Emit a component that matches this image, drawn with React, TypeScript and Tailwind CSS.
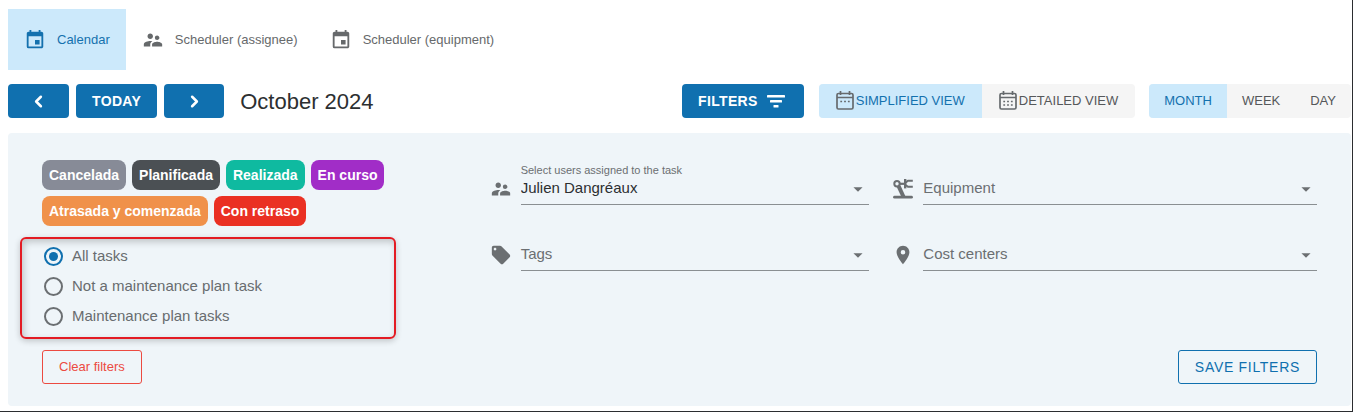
import { useState, type ReactNode } from "react";
import { ChevronLeft, ChevronRight } from "lucide-react";
import { MdArrowDropDown, MdEvent, MdLocalOffer, MdPlace, MdSupervisorAccount } from "react-icons/md";

const tabs = [
  { name: "Calendar", icon: <MdEvent size={22} /> },
  { name: "Scheduler (assignee)", icon: <MdSupervisorAccount size={22} /> },
  { name: "Scheduler (equipment)", icon: <MdEvent size={22} /> },
];

const statuses = [
  { name: "Cancelada", color: "bg-[#878b97]" },
  { name: "Planificada", color: "bg-[#4b5054]" },
  { name: "Realizada", color: "bg-[#0fbaa0]" },
  { name: "En curso", color: "bg-[#a12dc7]" },
  { name: "Atrasada y comenzada", color: "bg-[#f0914a]" },
  { name: "Con retraso", color: "bg-[#ea3023]" },
];

const taskTypes = ["All tasks", "Not a maintenance plan task", "Maintenance plan tasks"];

function CalendarIcon({ rows }: { rows: number[] }) {
  return (
    <svg width="18" height="20" viewBox="0 0 18 20" fill="none" stroke="#666a6d" strokeWidth="1.7" aria-hidden="true">
      <rect x="1" y="2.5" width="16" height="15.5" rx="1.5" />
      <path d="M1 6.5h16M4.5 0V4M13.5 0V4" />
      {rows.map((y) => (
        <path key={y} d={`M4.3 ${y}h1.8M8.1 ${y}h1.8M11.9 ${y}h1.8`} />
      ))}
    </svg>
  );
}

function FilterIcon() {
  return (
    <svg width="24" height="24" viewBox="0 0 24 24" fill="currentColor" aria-hidden="true">
      <rect x="3" y="6" width="18" height="2.6" rx=".6" />
      <rect x="6" y="11" width="12" height="2.6" rx=".6" />
      <rect x="9.5" y="16" width="5" height="2.6" rx=".6" />
    </svg>
  );
}

function RobotArmIcon() {
  return (
    <svg width="20" height="20" viewBox="0 0 20 20" fill="none" stroke="currentColor" aria-hidden="true">
      <circle cx="4" cy="4.8" r="2.7" strokeWidth="2" />
      <path d="M6.5 4.8H12" strokeWidth="2.2" />
      <path d="M12.2 0v9.4" strokeWidth="2.4" />
      <path d="M12.5 3.6 15 1.8h4.8M12.5 6 15 7.8h4.8" strokeWidth="2" />
      <path d="M5.6 7.2 10.6 18" strokeWidth="4" />
      <path d="M1.5 18.2h17" strokeWidth="2.8" strokeLinecap="round" />
    </svg>
  );
}

interface ToggleProps {
  options: { name: string; icon?: ReactNode }[];
  padding: string;
}

function ToggleGroup({ options, padding }: ToggleProps) {
  const [active, setActive] = useState(options[0].name);

  return (
    <div className="flex h-[34px] overflow-hidden rounded bg-[#f5f5f5] text-[13px]">
      {options.map((o) => (
        <button
          key={o.name}
          type="button"
          aria-pressed={active === o.name}
          onClick={() => setActive(o.name)}
          className={`flex items-center gap-0.5 whitespace-nowrap ${padding} ${
            active === o.name ? "bg-[#cce9fb] text-[#1471ae]" : "text-[#55585a]"
          }`}
        >
          {o.icon}
          {o.name}
        </button>
      ))}
    </div>
  );
}

interface FieldProps {
  id: string;
  icon: ReactNode;
  label: string;
  options?: string[];
}

// The label sits in the input line until something is selected, then moves above it
function SelectField({ id, icon, label, options = [] }: FieldProps) {
  const [value, setValue] = useState(options[0] ?? "");

  return (
    <div className="flex items-center gap-2.5 text-[#6b6f72]">
      <span className="flex w-5 shrink-0 justify-center pt-2">{icon}</span>
      <div className="relative min-w-0 flex-1 border-b border-[#8a8f92] pt-3">
        <label
          htmlFor={id}
          className={`pointer-events-none absolute left-0 ${
            value ? "top-0 text-[11px] leading-3" : "top-3 text-[15px] leading-6"
          }`}
        >
          {label}
        </label>
        <select
          id={id}
          value={value}
          onChange={(e) => setValue(e.target.value)}
          className="block h-7 w-full appearance-none bg-transparent pb-1 text-[15px] text-[#2c2f31] outline-none"
        >
          <option value=""></option>
          {options.map((o) => (
            <option key={o} value={o}>{o}</option>
          ))}
        </select>
        <MdArrowDropDown size={22} className="pointer-events-none absolute right-0 bottom-1" />
      </div>
    </div>
  );
}

export default function App() {
  const [tab, setTab] = useState("Calendar");
  const [taskType, setTaskType] = useState("All tasks");

  return (
    <div className="border-r border-b border-[#2b2d30] bg-white pt-[9px] pr-px pb-[5px] pl-2 font-['Liberation_Sans',Arial,sans-serif]">
      <nav className="flex h-[61px]">
        {tabs.map((t) => (
          <button
            key={t.name}
            type="button"
            onClick={() => setTab(t.name)}
            className={`flex items-center gap-[11px] px-4 text-[13px] ${
              tab === t.name ? "bg-[#cce9fb] text-[#1471ae]" : "text-[#66696b]"
            }`}
          >
            {t.icon}
            {t.name}
          </button>
        ))}
      </nav>

      <div className="mt-3.5 flex items-center">
        <div className="flex gap-[7px] text-sm font-bold text-white">
          <button type="button" aria-label="Previous" className="flex h-[34px] w-[61px] items-center justify-center rounded bg-[#1070af]">
            <ChevronLeft size={19} strokeWidth={3.2} />
          </button>
          <button type="button" className="h-[34px] rounded bg-[#1070af] px-4 tracking-wide">
            TODAY
          </button>
          <button type="button" aria-label="Next" className="flex h-[34px] w-[60px] items-center justify-center rounded bg-[#1070af]">
            <ChevronRight size={19} strokeWidth={3.2} />
          </button>
        </div>
        <h1 className="ml-4 text-[22px] text-[#2c2f31]">October 2024</h1>
        <button
          type="button"
          className="ml-auto flex h-[34px] items-center gap-1.5 rounded bg-[#1070af] px-4 text-sm font-bold tracking-wide text-white"
        >
          FILTERS
          <FilterIcon />
        </button>
        <div className="ml-[15px]">
          <ToggleGroup
            padding="px-[17px]"
            options={[
              { name: "SIMPLIFIED VIEW", icon: <CalendarIcon rows={[10.5]} /> },
              { name: "DETAILED VIEW", icon: <CalendarIcon rows={[10.5, 14]} /> },
            ]}
          />
        </div>
        <div className="ml-3.5">
          <ToggleGroup padding="px-[15px]" options={[{ name: "MONTH" }, { name: "WEEK" }, { name: "DAY" }]} />
        </div>
      </div>

      <section className="mt-[15px] rounded bg-[#eff5f9] pt-[27px] pr-[34px] pb-[22px] pl-[34px]">
        <div className="grid grid-cols-[425fr_379fr_424fr] gap-x-6">
          <div>
            <ul className="flex max-w-[360px] flex-wrap gap-1.5">
              {statuses.map((s) => (
                <li key={s.name} className={`rounded-lg px-[7px] text-sm leading-[30px] font-bold text-white ${s.color}`}>
                  {s.name}
                </li>
              ))}
            </ul>
            <fieldset
              aria-label="Task type"
              className="mt-[11px] -ml-[22px] w-[376px] rounded-md border-2 border-[#e31b23] pt-0.5 pb-1.5 pl-[22px] shadow-[0_2px_6px_rgba(0,0,0,0.2),inset_2px_3px_7px_rgba(0,0,0,0.2)]"
            >
              {taskTypes.map((t) => (
                <label key={t} className="flex h-[30px] items-center gap-[9px] text-[15px] text-[#686c6f]">
                  <input
                    type="radio"
                    name="taskType"
                    checked={taskType === t}
                    onChange={() => setTaskType(t)}
                    className="size-[19px] appearance-none rounded-full border-2 border-[#6b6f72] bg-clip-content p-[3px] checked:border-[#1070af] checked:bg-[#1070af]"
                  />
                  {t}
                </label>
              ))}
            </fieldset>
          </div>
          <div className="flex flex-col gap-[25px] pt-1">
            <SelectField
              id="users"
              icon={<MdSupervisorAccount size={22} className="shrink-0" />}
              label="Select users assigned to the task"
              options={["Julien Dangréaux"]}
            />
            <SelectField id="tags" icon={<MdLocalOffer size={22} className="shrink-0" />} label="Tags" />
          </div>
          <div className="flex flex-col gap-[25px] pt-1">
            <SelectField id="equipment" icon={<RobotArmIcon />} label="Equipment" />
            <SelectField id="costCenters" icon={<MdPlace size={22} className="shrink-0" />} label="Cost centers" />
          </div>
        </div>
        <div className="mt-[11px] flex justify-between">
          <button type="button" className="h-[34px] rounded-[3px] border border-[#ec4a41] px-4 text-[13px] text-[#ec4a41]">
            Clear filters
          </button>
          <button type="button" className="h-[34px] rounded-[3px] border border-[#1070af] px-4 text-sm tracking-wider text-[#1070af]">
            SAVE FILTERS
          </button>
        </div>
      </section>
    </div>
  );
}
